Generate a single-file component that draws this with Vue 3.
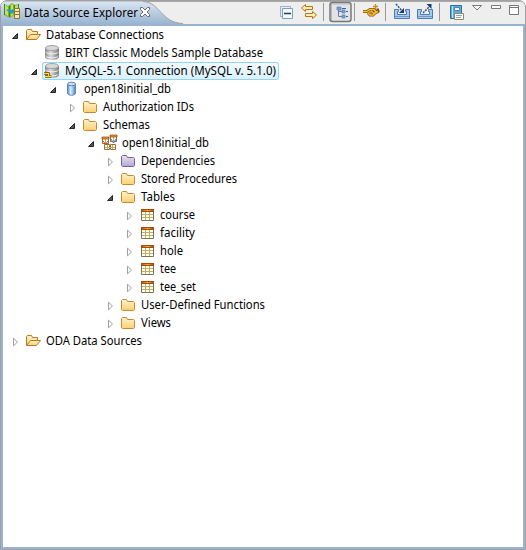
<script setup>
const rows = [
  { t: 'Database Connections', l: 0, a: 'open', i: 'opened', w: 118 },
  { t: 'BIRT Classic Models Sample Database', l: 1, a: '', i: 'db', w: 198 },
  { t: 'MySQL-5.1 Connection (MySQL v. 5.1.0)', l: 1, a: 'open', i: 'dblink', w: 211, sel: true },
  { t: 'open18initial_db', l: 2, a: 'open', i: 'cyl', w: 87 },
  { t: 'Authorization IDs', l: 3, a: 'closed', i: 'folder', w: 91 },
  { t: 'Schemas', l: 3, a: 'open', i: 'folder', w: 47 },
  { t: 'open18initial_db', l: 4, a: 'open', i: 'schema', w: 87 },
  { t: 'Dependencies', l: 5, a: 'closed', i: 'purple', w: 74 },
  { t: 'Stored Procedures', l: 5, a: 'closed', i: 'folder', w: 96 },
  { t: 'Tables', l: 5, a: 'open', i: 'folder', w: 34 },
  { t: 'course', l: 6, a: 'closed', i: 'table', w: 35 },
  { t: 'facility', l: 6, a: 'closed', i: 'table', w: 35 },
  { t: 'hole', l: 6, a: 'closed', i: 'table', w: 23 },
  { t: 'tee', l: 6, a: 'closed', i: 'table', w: 16 },
  { t: 'tee_set', l: 6, a: 'closed', i: 'table', w: 36 },
  { t: 'User-Defined Functions', l: 5, a: 'closed', i: 'folder', w: 124 },
  { t: 'Views', l: 5, a: 'closed', i: 'folder', w: 30 },
  { t: 'ODA Data Sources', l: 0, a: 'closed', i: 'opened', w: 96 },
]
</script>

<template>
  <div class="view">
    <svg class="defs" width="0" height="0">
      <defs>
        <linearGradient id="gold" x2="0" y2="1"><stop stop-color="#fff3cf" /><stop offset="1" stop-color="#fbcf72" /></linearGradient>
        <linearGradient id="violet" x2="0" y2="1"><stop stop-color="#eee2e6" /><stop offset="1" stop-color="#b0a8dc" /></linearGradient>
        <linearGradient id="grey"><stop stop-color="#858585" /><stop offset=".4" stop-color="#dcdcdc" /><stop offset="1" stop-color="#777" /></linearGradient>
        <linearGradient id="blue"><stop stop-color="#5187cb" /><stop offset=".4" stop-color="#e1f0fe" /><stop offset="1" stop-color="#4e83c8" /></linearGradient>
        <linearGradient id="tabfill" x2="0" y2="1"><stop stop-color="#d9e5f2" /><stop offset="1" stop-color="#99b4d1" /></linearGradient>
        <linearGradient id="head"><stop stop-color="#b85a0c" /><stop offset=".5" stop-color="#f6a93e" /><stop offset="1" stop-color="#b0520a" /></linearGradient>
      </defs>
    </svg>
    <header class="bar">
      <div class="tab">
        <svg class="tabshape" width="190" height="24">
          <path d="M1 24V7Q2 2 7 1.5H143C160 2 161 23 183 23.5V24Z" fill="url(#tabfill)" />
          <path d="M143 1.5C160 2 161 23 183 23.5" fill="none" stroke="#a0a0a0" />
        </svg>
        <svg class="logo" width="17" height="16">
          <path d="M0 1L4 3L8 0L11 2L15 1V13L10 12L6 15L0 12Z" fill="#76b83a" />
          <path d="M1 2L4 4V13L1 11ZM7 2L9 1V12L7 13ZM11 3L14 2V8H11Z" fill="#c3e45a" />
          <path d="M.5 1V12M5.500 3V14M10.500 2V12M14.500 1V5" stroke="#3d7d2c" />
          <path d="M2 7L5 6L7 7L9 6L11 8L8 11L5 9Z" fill="#2c9bb5" />
          <path d="M10.500 5.500H15.500V15.500H10.500Z" fill="#f6e8b4" stroke="#8d752c" />
          <path d="M11 8.500H15M11 11.500H15" stroke="#8d752c" />
        </svg>
        <svg class="title" width="118" height="20"><text x="0" y="14" textLength="114" lengthAdjust="spacingAndGlyphs">Data Source Explorer</text></svg>
        <svg class="close" width="12" height="12"><path d="M1.500 1.500H3.500L6 4L8.500 1.500H10.500V3.500L8 6L10.500 8.500V10.500H8.500L6 8L3.500 10.500H1.500V8.500L4 6L1.500 3.500Z" fill="#fff" stroke="#6b6b6b" /></svg>
      </div>
      <div class="tools">
        <svg width="256" height="23">
          <g transform="translate(-270 0)">
            <path d="M280.500 16.500V6.500H290.500V8.500M280.500 16.500H282" fill="none" stroke="#9bb2cd" />
            <path d="M282.500 8.500H292.500V18.500H282.500Z" fill="#f4faff" stroke="#7e9cc0" /><path d="M284 13.500H291" stroke="#123f79" stroke-width="1.400" />
            <path d="M301.500 8L305.500 4.500V6.500H312.500V9.500H305.500V11.500ZM316.500 15L312.500 11.500V13.500H305.500V16.500H312.500V18.500Z" fill="#fff0b2" stroke="#b87514" />
            <path d="M323.500 3V21M354.500 3V21M385.500 3V21M439.500 3V21" stroke="#999" />
            <rect x="330" y="2.500" width="21" height="19" rx="2.500" fill="#e2e3e7" stroke="#777" stroke-width="1.500" />
            <path d="M331.500 20V4H350" fill="none" stroke="#b8b8b8" />
            <path d="M338.500 10V16.500H342M339 11.500H342" fill="none" stroke="#6f7987" />
            <path d="M337 7H341V10H337ZM342 10H345V13H342ZM342 15H345V18H342Z" fill="#7ca3d0" stroke="#5480b3" stroke-width=".7" /><path d="M342 8.500H346M346 11.500H348M346 16.500H348" stroke="#356696" />
            <path d="M363 11.500H367L370 9.500H374L376 12L373 15H370L368 13M371 11L374 13.500L378 11.500V10H379" fill="none" stroke="#86510a" stroke-width="3" />
            <path d="M363 11.500H367L370 9.500H374L376 12L373 15H370L368 13M371 11L374 13.500L378 11.500" fill="none" stroke="#f6bf34" stroke-width="1.500" />
            <path d="M375.500 4V9M373 6.500H378" stroke="#c69125" stroke-width="1.300" />
            <g id="tray"><path d="M394.500 9.500H398.500V11.500H397.500V14.500H406.500V11.500H405.500V9.500H409.500V18.500H394.500Z" fill="#a9c9ec" stroke="#4f79b0" /><path d="M395 16.500H409" stroke="#7298c8" /></g>
            <use href="#tray" x="23" />
            <path d="M396 4L403 12" stroke="#245784" stroke-width="1.500" stroke-dasharray="2 1" /><path d="M404 8V13H399Z" fill="#163d6b" />
            <path d="M423 13L430 6" stroke="#245784" stroke-width="1.500" stroke-dasharray="2 1" /><path d="M426.500 4H431.500V9Z" fill="#163d6b" />
            <path d="M450.500 5.500H461.500V18.500H450.500Z" fill="#65a9d8" stroke="#2e6fa9" /><path d="M452.500 6V18" stroke="#b9e2f3" /><path d="M454.500 7.500H459.500V10.500H454.500Z" fill="#e9f7fc" stroke="#4987b7" />
            <path d="M454.500 13.500H463.500V19.500H454.500Z" fill="#fffdf2" stroke="#8f8b71" /><path d="M456 15.500H462M456 17.500H461" stroke="#8caac2" />
            <path d="M472.500 5.500H481.500L477 10Z" fill="#fff" stroke="#777" />
            <path d="M491.500 5.500H500.500V8.500H491.500Z" fill="#fff" stroke="#777" />
            <path d="M509.500 5.500H518.500V14.500H509.500ZM509.500 7.500H518.500" fill="#fff" stroke="#777" />
          </g>
        </svg>
      </div>
    </header>
    <main class="tree">
      <div v-for="(r, n) in rows" :key="n" class="row" :style="{ paddingLeft: 7 + 19 * r.l + 'px' }">
        <svg class="arrow" width="12" height="18">
          <path v-if="r.a === 'open'" d="M7.500 7.500V12.500H2.500Z" fill="#555" stroke="#262626" />
          <path v-if="r.a === 'closed'" d="M3.500 6.200V13.800L7.500 10Z" fill="#fff" stroke="#a0a0a0" />
        </svg>
        <div class="item" :class="{ selected: r.sel }">
          <svg class="icon" width="17" height="18">
            <g v-if="r.i === 'opened'" stroke="#b77a22" stroke-linejoin="round">
              <path d="M1.500 13.500V4.500L2.500 3.500H6.500L7.500 5.500H12.500V8.500" fill="url(#gold)" />
              <path d="M1.500 13.500L5.500 8.500H15.500L11.500 13.500Z" fill="url(#gold)" />
            </g>
            <path v-else-if="r.i === 'folder'" d="M1.500 13.500V4.500L2.500 3.500H6.500L7.500 5.500H13.500L14.500 6.500V13.500L13.500 14.500H2.500Z" fill="url(#gold)" stroke="#c28a32" />
            <path v-else-if="r.i === 'purple'" d="M1.500 13.500V4.500L2.500 3.500H6.500L7.500 5.500H13.500L14.500 6.500V13.500L13.500 14.500H2.500Z" fill="url(#violet)" stroke="#77628e" />
            <g v-else-if="r.i === 'db' || r.i === 'dblink'">
              <path d="M1 4V13C2 17 14 17 15 13V4Z" fill="url(#grey)" />
              <ellipse cx="8" cy="4" rx="6.500" ry="2.500" fill="#d5dad8" stroke="#a2a2a2" />
              <path d="M1.500 8C3 10.500 13 10.500 14.500 8M1.500 12C3 14.500 13 14.500 14.500 12" fill="none" stroke="#f2f2f2" />
              <path v-if="r.i === 'dblink'" d="M0 11.500H4.500V14.500H7.500M1 14.500H4" fill="none" stroke="#765500" stroke-width="2.600" />
              <path v-if="r.i === 'dblink'" d="M0 11.500H4.500V14.500H7.500M1 14.500H4" fill="none" stroke="#ffd82f" stroke-width="1.100" />
            </g>
            <g v-else-if="r.i === 'cyl'" stroke="#5686bf">
              <path d="M4.500 4V13C4.500 16 12.500 16 12.500 13V4Z" fill="url(#blue)" /><ellipse cx="8.500" cy="4" rx="4" ry="1.800" fill="#c9e1f8" />
            </g>
            <g v-else-if="r.i === 'schema'">
              <path d="M1.500 3.500H7.500V9.500H1.500ZM9.500 1.500H15.500V7.500H9.500ZM3.500 10.500H8.500V15.500H3.500ZM9.500 10.500H14.500V15.500H9.500Z" fill="#fffced" stroke="#94713c" />
              <path d="M4.500 5V9M12.500 3V8M6.500 11V15M11.500 11V15M4 13.500H14" stroke="#c3a86e" />
              <path d="M1 3H8V5H1ZM9 1H16V3H9Z" fill="#ed9a2c" stroke="#86470e" stroke-width=".7" />
              <path d="M2 7L4.500 10L7 7" fill="none" stroke="#dc4444" /><path d="M10 5L12.500 9L15 5" fill="none" stroke="#3d6fd2" />
            </g>
            <g v-else>
              <path d="M2.500 4.500H14.500V14.500H2.500Z" fill="#fffef2" stroke="#7b7557" />
              <path d="M6.500 6V14M10.500 6V14M3 8.500H14M3 11.500H14" stroke="#c1ae6c" />
              <rect x="2" y="3" width="13" height="3" fill="#a64c08" /><rect x="3" y="4" width="11" height="1" fill="url(#head)" />
            </g>
          </svg>
          <svg class="label" :width="r.w + 3" height="18"><text x="0" y="13" :textLength="r.w" lengthAdjust="spacingAndGlyphs">{{ r.t }}</text></svg>
        </div>
      </div>
    </main>
  </div>
</template>

<style>
body { margin: 0; background: #fff; }
</style>
<style scoped>
.view { position: relative; box-sizing: border-box; width: 526px; height: 550px; display: flex; flex-direction: column; border: 1px solid #a0a0a0; border-radius: 7px 7px 0 0; background: #99b4d1; overflow: hidden; font: 12px "Noto Sans", "Open Sans", sans-serif; }
.defs { position: absolute; }
.bar { height: 23px; flex: none; display: flex; justify-content: space-between; background: #eee; border-top: 1px solid #aaa; box-sizing: border-box; }
.tab { position: relative; display: flex; align-items: flex-start; width: 190px; margin-top: -2px; margin-left: -1px; }
.tabshape { position: absolute; left: 0; top: 0; }
.logo { position: relative; margin: 3px 0 0 4px; }
.title { position: relative; margin: 3px 0 0 3px; }
.close { position: relative; margin: 6px 0 0 -3px; }
.tools { margin-top: -2px; margin-right: -1px; }
svg { display: block; flex: none; overflow: visible; }
.tree { flex: 1; background: #fff; margin: 2px; }
.row { display: flex; height: 18px; box-sizing: border-box; }
.item { display: flex; height: 18px; margin-left: 3px; }
.label { margin-left: 4px; }
.selected { border-radius: 3px; background: linear-gradient(#f3fbff, #d9f1fd); box-shadow: inset 0 0 0 1px #94d5f5; margin-left: 1px; padding-left: 2px; }
text { fill: #000; }
</style>
